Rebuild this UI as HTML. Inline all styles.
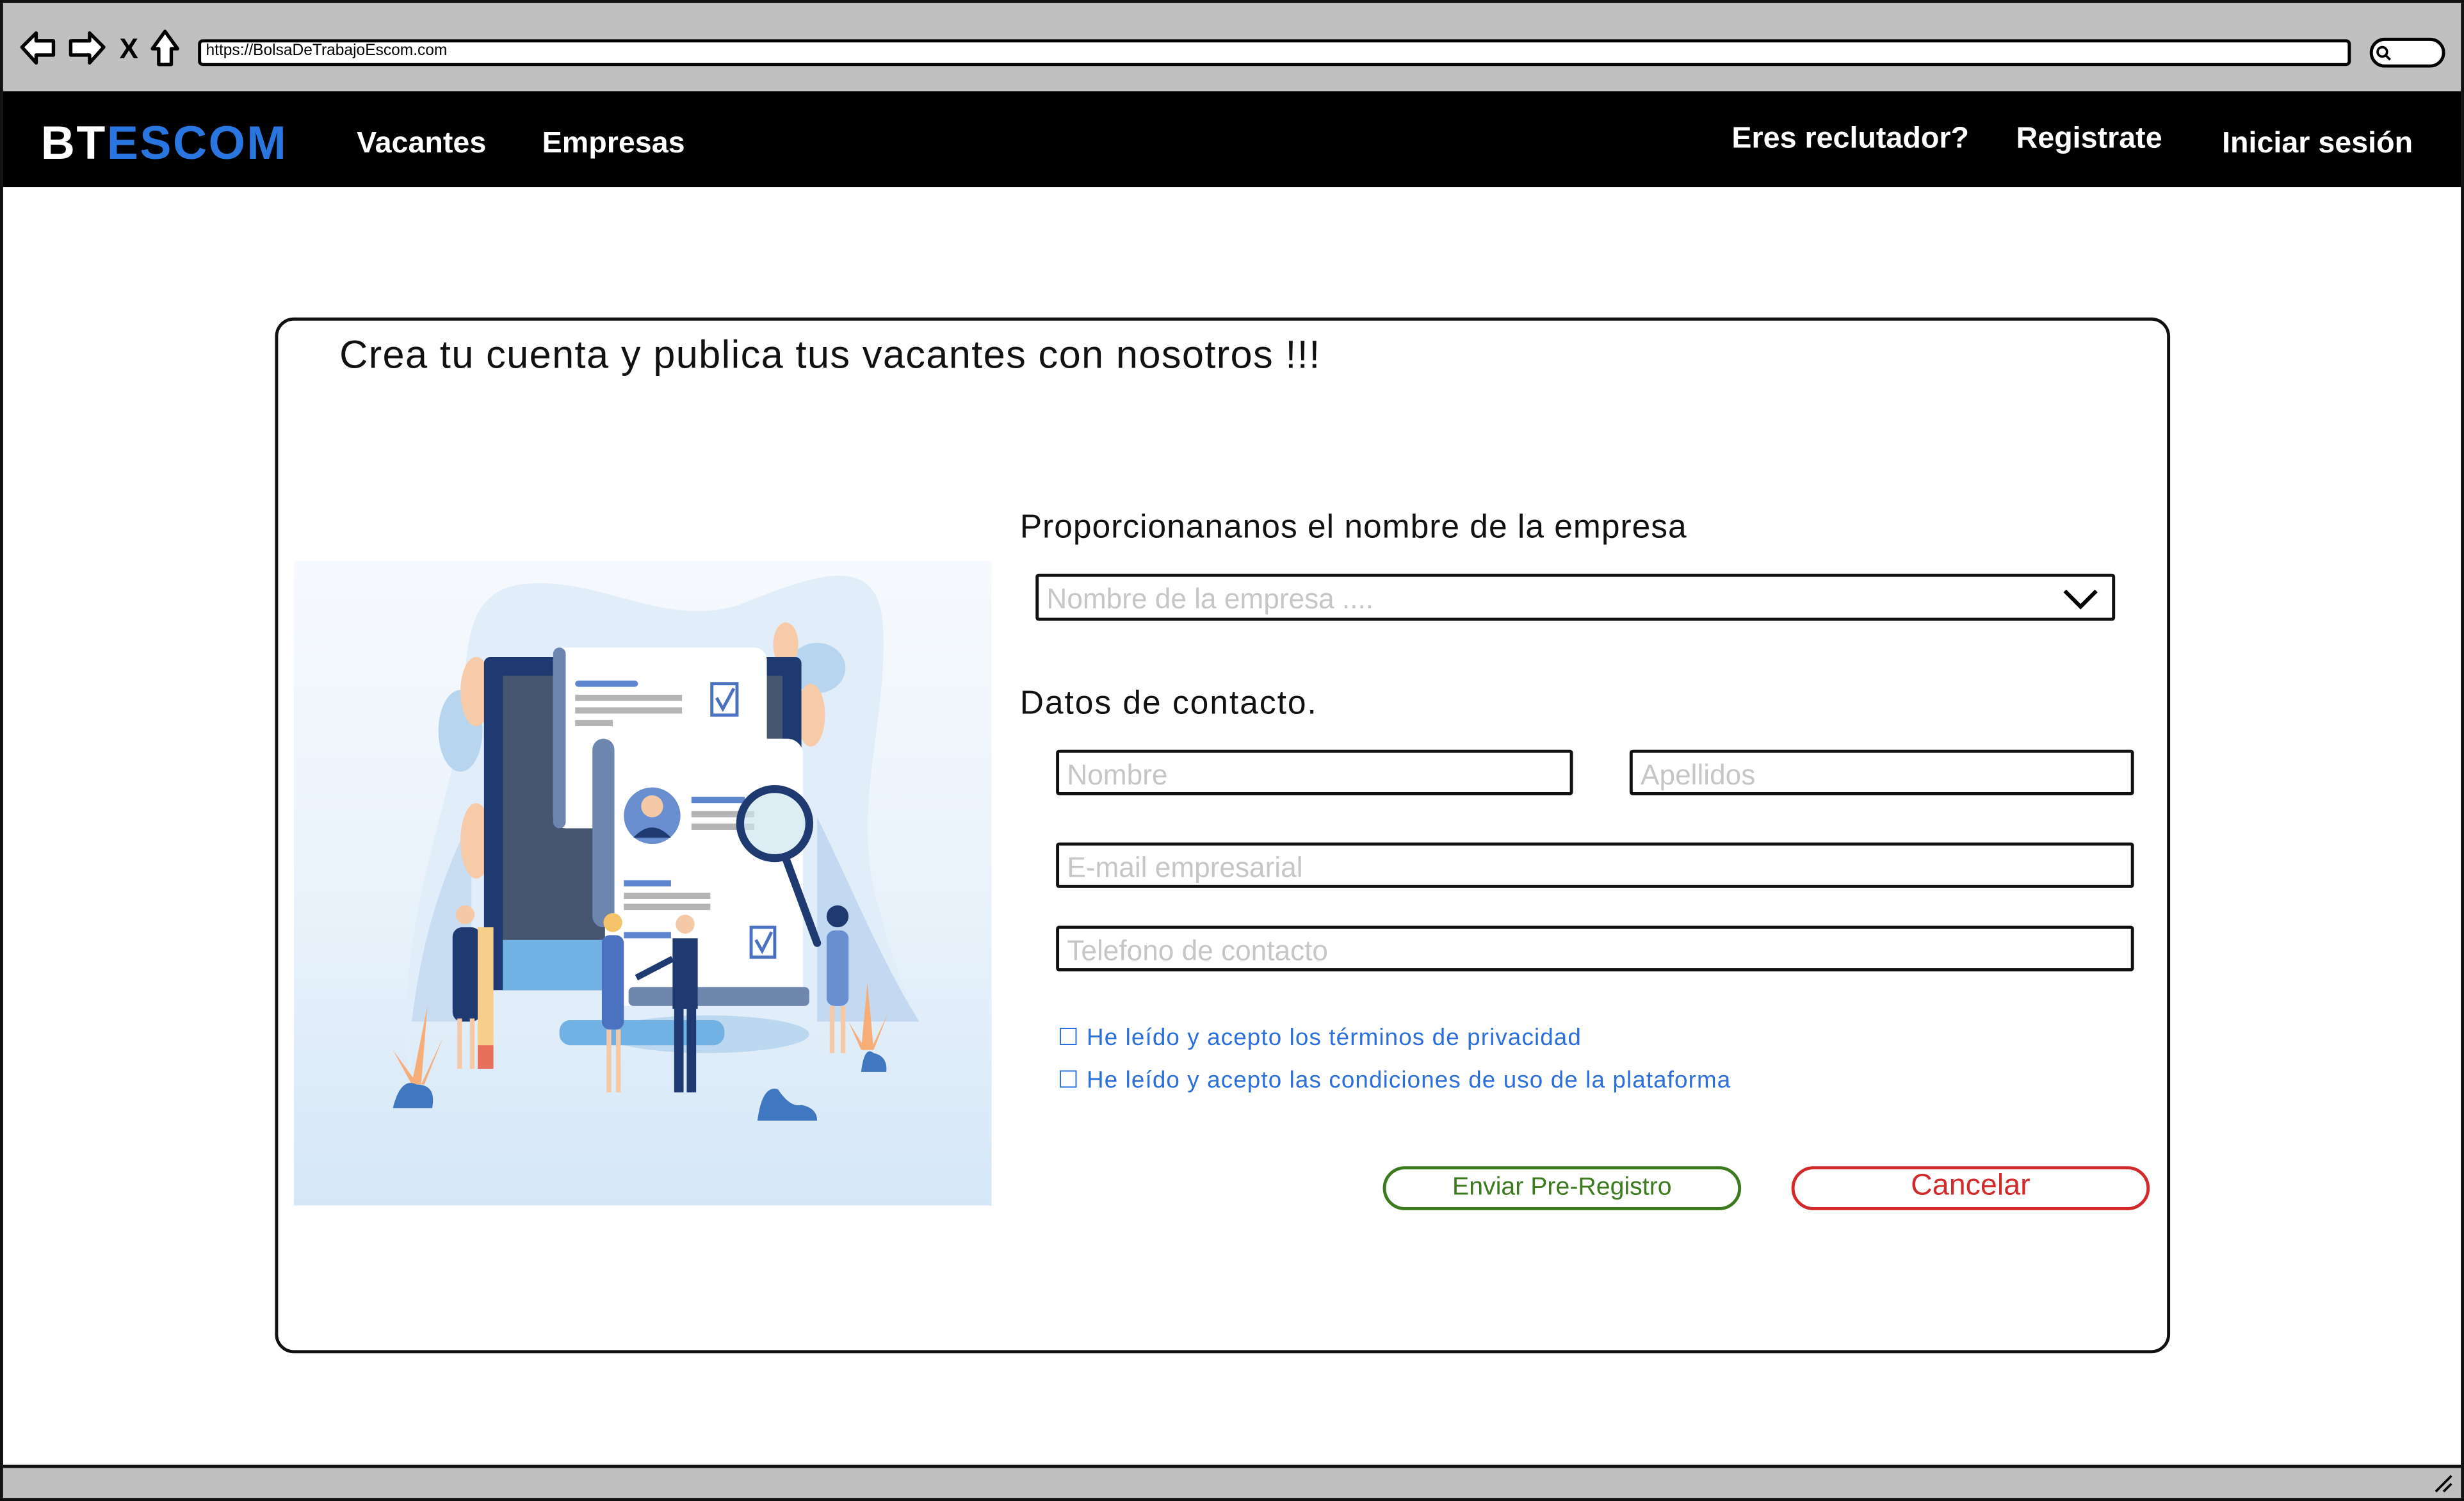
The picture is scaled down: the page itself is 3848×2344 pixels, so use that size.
<!DOCTYPE html>
<html><head><meta charset="utf-8">
<style>
html,body{margin:0;padding:0;background:#fff;overflow:hidden}
body{width:3848px;height:2344px;position:relative}
#w{position:absolute;left:0;top:0;width:1568px;height:955px;transform-origin:0 0;transform:scale(2.45408,2.45445);font-family:"Liberation Sans",sans-serif}
.a{position:absolute}
.t{position:absolute;white-space:nowrap;line-height:1}
.inp{position:absolute;border:2px solid #111;border-radius:2px;background:#fff;box-sizing:border-box}
.ph{position:absolute;left:5px;top:4px;color:#c6c6c6;font-size:18px;white-space:nowrap}
.nav{color:#fff;font-weight:bold;font-size:19px}
.chk{color:#2a6fdb;font-size:15px;letter-spacing:0.45px}
</style></head><body>
<div id="w">
 <div class="a" style="left:0;top:0;width:1568px;height:955px;box-sizing:border-box;border:2px solid #111;"></div>
 <div class="a" style="left:2px;top:2px;width:1564px;height:56px;background:#c0c0c0"></div>
 <svg class="a" style="left:10px;top:16px" width="110" height="30" viewBox="0 0 110 30">
  <path d="M4 14 L13 5 L13 10 L24 10 L24 19 L13 19 L13 24 Z" fill="#fff" stroke="#000" stroke-width="2.2" stroke-linejoin="round"/>
  <path d="M56 14 L47 5 L47 10 L35 10 L35 19 L47 19 L47 24 Z" fill="#fff" stroke="#000" stroke-width="2.2" stroke-linejoin="round"/>
  <text x="66" y="21" font-family="Liberation Sans" font-weight="bold" font-size="18">X</text>
  <path d="M95 4 L87 15 L91 15 L91 25 L99 25 L99 15 L103 15 Z" fill="#fff" stroke="#000" stroke-width="2.2" stroke-linejoin="round"/>
 </svg>
 <div class="a" style="left:126px;top:25px;width:1370px;height:17px;background:#fff;border:2px solid #000;border-radius:3px;box-sizing:border-box"></div>
 <div class="t" style="left:131px;top:28px;font-size:10px;color:#000">https://BolsaDeTrabajoEscom.com</div>
 <div class="a" style="left:1508px;top:24px;width:48px;height:19px;background:#fff;border:2px solid #000;border-radius:10px;box-sizing:border-box"></div>
 <svg class="a" style="left:1511px;top:28px" width="14" height="12"><circle cx="5" cy="5" r="3" fill="none" stroke="#000" stroke-width="1.5"/><line x1="7" y1="7" x2="10" y2="10" stroke="#000" stroke-width="1.5"/></svg>
 <div class="a" style="left:2px;top:58px;width:1564px;height:61px;background:#000"></div>
 <div class="t" style="left:26px;top:77px;font-size:30px;font-weight:bold;color:#fff;letter-spacing:1px">BT<span style="color:#2a76e0">ESCOM</span></div>
 <div class="t nav" style="left:227px;top:82px">Vacantes</div>
 <div class="t nav" style="left:345px;top:82px">Empresas</div>
 <div class="t nav" style="left:1102px;top:79px">Eres reclutador?</div>
 <div class="t nav" style="left:1283px;top:79px">Registrate</div>
 <div class="t nav" style="left:1414px;top:82px">Iniciar sesión</div>
 <div class="a" style="left:175px;top:202px;width:1206px;height:659px;border:2px solid #111;border-radius:12px;box-sizing:border-box"></div>
 <div class="t" style="left:216px;top:214px;font-size:25px;color:#111;letter-spacing:0.55px">Crea tu cuenta y publica tus vacantes con nosotros !!!</div>
 <svg class="a" style="left:187px;top:357px" width="444" height="410" viewBox="187 357 444 410">
  <defs><linearGradient id="g" x1="0" y1="0" x2="0" y2="1"><stop offset="0" stop-color="#f6f9fd"/><stop offset="0.5" stop-color="#eaf3fb"/><stop offset="1" stop-color="#d5e7f7"/></linearGradient></defs>
  <rect x="187" y="357" width="444" height="410" fill="url(#g)"/>
  <path d="M262 700 C250 620 270 560 290 480 C300 420 290 380 330 372 C380 365 420 400 470 385 C520 365 560 350 562 400 C565 460 540 520 560 580 C570 620 580 640 585 650 L262 650 Z" fill="#e1edf9"/>
  <path d="M262 650 C268 600 280 560 300 520 L300 650 Z" fill="#c8ddf2"/>
  <path d="M520 520 C540 560 560 610 585 650 L520 650 Z" fill="#c2d9f1"/>
  <ellipse cx="293" cy="465" rx="14" ry="26" fill="#b7d5ef"/>
  <ellipse cx="303" cy="440" rx="10" ry="22" fill="#f7cba7"/>
  <ellipse cx="303" cy="535" rx="10" ry="24" fill="#f7cba7"/>
  <ellipse cx="520" cy="425" rx="18" ry="16" fill="#b7d5ef"/>
  <ellipse cx="516" cy="455" rx="9" ry="20" fill="#f7cba7"/>
  <ellipse cx="500" cy="410" rx="8" ry="14" fill="#f7cba7"/>
  <rect x="308" y="418" width="202" height="212" rx="4" fill="#1f3a70"/>
  <rect x="320" y="430" width="178" height="170" fill="#465570"/>
  <rect x="320" y="598" width="178" height="32" fill="#72b1e3"/>
  <rect x="352" y="412" width="136" height="115" rx="8" fill="#fff"/>
  <rect x="352" y="412" width="8" height="115" rx="4" fill="#6d86b0"/>
  <rect x="366" y="433" width="40" height="4" rx="2" fill="#5d86cf"/>
  <rect x="366" y="442" width="68" height="4" fill="#b4b4b4"/>
  <rect x="366" y="450" width="68" height="4" fill="#b4b4b4"/>
  <rect x="366" y="458" width="24" height="4" fill="#b4b4b4"/>
  <rect x="453" y="435" width="16" height="20" fill="none" stroke="#4a72c0" stroke-width="2"/>
  <path d="M456 444 L460 451 L467 438" fill="none" stroke="#4a72c0" stroke-width="2"/>
  <rect x="385" y="470" width="126" height="170" rx="10" fill="#fff"/>
  <rect x="377" y="470" width="14" height="120" rx="7" fill="#6d86b0"/>
  <circle cx="415" cy="519" r="18" fill="#6a8fd0"/>
  <circle cx="415" cy="513" r="7" fill="#f6c9a6"/>
  <path d="M403 533 Q415 520 427 533 Z" fill="#1f3a70"/>
  <rect x="440" y="507" width="34" height="4" fill="#5d86cf"/>
  <rect x="440" y="516" width="40" height="4" fill="#b4b4b4"/>
  <rect x="440" y="524" width="40" height="4" fill="#b4b4b4"/>
  <rect x="397" y="560" width="30" height="4" fill="#5d86cf"/>
  <rect x="397" y="568" width="55" height="4" fill="#b4b4b4"/>
  <rect x="397" y="575" width="55" height="4" fill="#b4b4b4"/>
  <rect x="397" y="593" width="30" height="4" fill="#5d86cf"/>
  <rect x="478" y="590" width="15" height="19" fill="none" stroke="#4a72c0" stroke-width="2"/>
  <path d="M481 598 L485 605 L491 593" fill="none" stroke="#4a72c0" stroke-width="2"/>
  <rect x="400" y="628" width="115" height="12" rx="3" fill="#6f86ad"/>
  <circle cx="493" cy="524" r="22" fill="#cfe6ef" fill-opacity="0.7" stroke="#1f3a70" stroke-width="5"/>
  <line x1="500" y1="546" x2="520" y2="600" stroke="#1f3a70" stroke-width="5" stroke-linecap="round"/>
  <ellipse cx="450" cy="658" rx="65" ry="12" fill="#bcd8f1"/>
  <rect x="356" y="649" width="105" height="16" rx="7" fill="#72b1e3"/>
  <rect x="288" y="590" width="18" height="60" rx="6" fill="#1f3a70"/>
  <circle cx="296" cy="582" r="6" fill="#f6c9a6"/>
  <rect x="291" y="648" width="3" height="32" fill="#f6c9a6"/><rect x="299" y="648" width="3" height="32" fill="#f6c9a6"/>
  <rect x="304" y="590" width="10" height="90" fill="#f7cf8a"/><rect x="304" y="665" width="10" height="15" fill="#e8705a"/>
  <rect x="383" y="595" width="14" height="60" rx="5" fill="#4a72c0"/>
  <circle cx="390" cy="587" r="6" fill="#f4c36a"/>
  <rect x="386" y="655" width="3" height="40" fill="#f6c9a6"/><rect x="392" y="655" width="3" height="40" fill="#f6c9a6"/>
  <rect x="428" y="597" width="16" height="45" fill="#1f3a70"/>
  <rect x="429" y="640" width="6" height="55" fill="#1f3a70"/><rect x="437" y="640" width="6" height="55" fill="#1f3a70"/>
  <circle cx="436" cy="588" r="6" fill="#f6c9a6"/>
  <line x1="428" y1="610" x2="405" y2="622" stroke="#1f3a70" stroke-width="4"/>
  <rect x="526" y="592" width="14" height="48" rx="5" fill="#6a8fd0"/>
  <circle cx="533" cy="583" r="7" fill="#1f3a70"/>
  <rect x="528" y="640" width="3" height="30" fill="#f6c9a6"/><rect x="535" y="640" width="3" height="30" fill="#f6c9a6"/>
  <path d="M262 690 L272 640 L268 690 Z M262 690 L250 668 L266 690 Z M268 690 L282 660 L270 690 Z" fill="#f6ad78"/>
  <path d="M250 705 Q255 685 265 690 Q278 690 275 705 Z" fill="#3f78c0"/>
  <path d="M548 668 L552 625 L556 668 Z M548 668 L540 650 L551 668 Z M554 668 L565 645 L556 668 Z" fill="#f6ad78"/>
  <path d="M548 682 Q550 665 556 670 Q565 672 564 682 Z" fill="#3f78c0"/>
  <path d="M482 713 Q485 690 495 693 Q503 705 510 703 Q520 705 520 713 Z" fill="#3f78c0"/>
 </svg>
 <div class="t" style="left:649px;top:325px;font-size:21px;color:#111;letter-spacing:0.4px">Proporcionananos el nombre de la empresa</div>
 <div class="inp" style="left:659px;top:365px;width:687px;height:30px"><div class="ph">Nombre de la empresa ....</div>
  <svg class="a" style="right:8px;top:7px" width="24" height="14"><path d="M2 2 L12 12 L22 2" fill="none" stroke="#000" stroke-width="2.5"/></svg></div>
 <div class="t" style="left:649px;top:437px;font-size:21px;color:#111;letter-spacing:0.8px">Datos de contacto.</div>
 <div class="inp" style="left:672px;top:477px;width:329px;height:29px"><div class="ph">Nombre</div></div>
 <div class="inp" style="left:1037px;top:477px;width:321px;height:29px"><div class="ph">Apellidos</div></div>
 <div class="inp" style="left:672px;top:536px;width:686px;height:29px"><div class="ph">E-mail empresarial</div></div>
 <div class="inp" style="left:672px;top:589px;width:686px;height:29px"><div class="ph">Telefono de contacto</div></div>
 <div class="t chk" style="left:673px;top:653px">☐ He leído y acepto los términos de privacidad</div>
 <div class="t chk" style="left:673px;top:680px">☐ He leído y acepto las condiciones de uso de la plataforma</div>
 <div class="a" style="left:880px;top:742px;width:228px;height:28px;border:2px solid #3c7a1e;border-radius:14px;box-sizing:border-box;color:#3c7a1e;font-size:16px;text-align:center;line-height:24px">Enviar Pre-Registro</div>
 <div class="a" style="left:1140px;top:742px;width:228px;height:28px;border:2px solid #d22a2a;border-radius:14px;box-sizing:border-box;color:#d22a2a;font-size:19px;text-align:center;line-height:22px">Cancelar</div>
 <div class="a" style="left:2px;top:932px;width:1564px;height:21px;background:#c0c0c0;border-top:2px solid #111;box-sizing:border-box"></div>
 <svg class="a" style="left:1548px;top:937px" width="14" height="14"><path d="M2 12 L12 2 M7 12 L12 7" stroke="#000" stroke-width="1.5"/></svg>
</div>
</body></html>
